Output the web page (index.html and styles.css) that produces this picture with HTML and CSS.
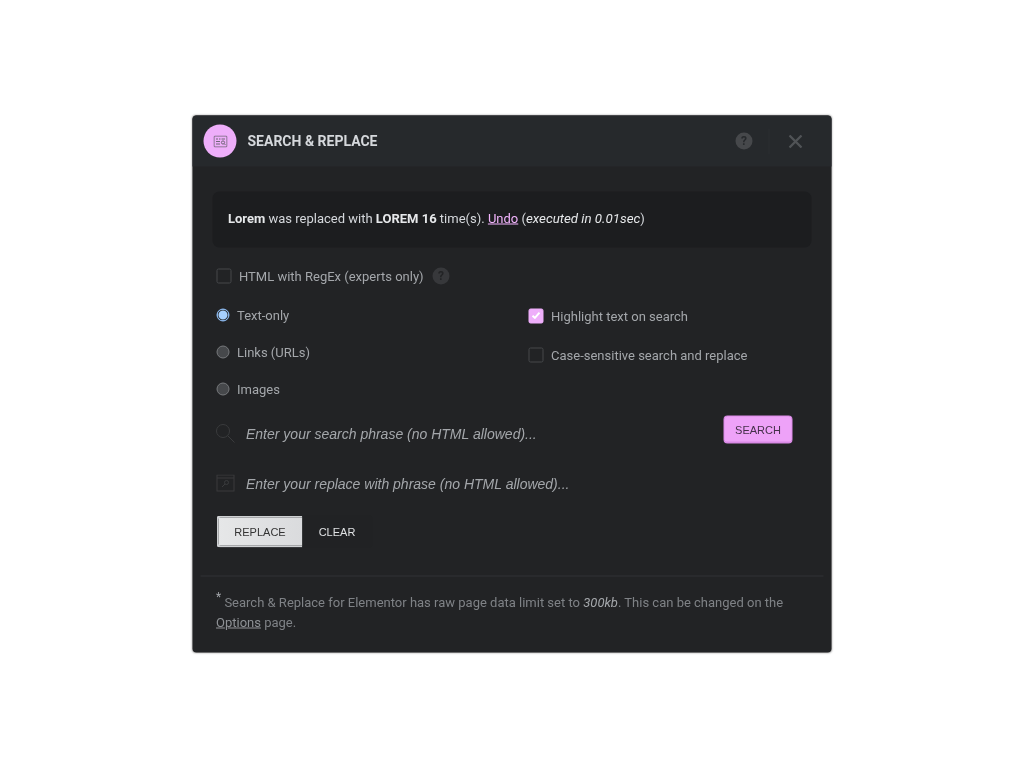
FILE: index.html
```html
<!DOCTYPE html>
<html lang="en">
<head>
<meta charset="utf-8">
<title>Search &amp; Replace</title>
<link rel="stylesheet" href="styles.css">
</head>
<body>
<div class="dialog">
  <header class="head">
    <span class="logo">
      <svg width="14" height="12" viewBox="0 0 14 12" fill="none" stroke="#6f6577" stroke-width="1">
        <rect x="0.5" y="0.5" width="13" height="11" rx="1"/>
        <path d="M2.500 3.500h2M5.500 3.500h1.500M8 3.500h3.500M2.500 6h4M2.500 8.500h4"/>
        <circle cx="9.500" cy="7" r="1.600"/>
        <path d="M10.700 8.200l1.300 1.300"/>
      </svg>
    </span>
    <h1 class="title">SEARCH &amp; REPLACE</h1>
    <span class="head-help">?</span>
    <span class="head-sep"></span>
    <svg class="head-close" width="14" height="14" viewBox="0 0 14 14" fill="none" stroke="#505356" stroke-width="2.400">
      <path d="M1 1l12 12M13 1L1 13"/>
    </svg>
  </header>
  <main class="body">
    <p class="notice"><b>Lorem</b> was replaced with <b>LOREM 16</b> time(s). <a class="undo" href="#">Undo</a> (<i>executed in 0.01sec</i>)</p>
    <div class="regex">
      <span class="check"></span>
      <span class="label regex-label">HTML with RegEx (experts only)</span>
      <span class="help">?</span>
    </div>
    <div class="columns">
      <div class="radios">
        <div class="radio-row"><span class="radio on"></span><span class="label">Text-only</span></div>
        <div class="radio-row"><span class="radio"></span><span class="label">Links (URLs)</span></div>
        <div class="radio-row"><span class="radio"></span><span class="label">Images</span></div>
      </div>
      <div class="checks">
        <div class="check-row">
          <span class="check checked">
            <svg width="9" height="8" viewBox="0 0 9 8" fill="none" stroke="#fff" stroke-width="2"><path d="M1 4.200l2.400 2.200L8 1.200"/></svg>
          </span>
          <span class="label">Highlight text on search</span>
        </div>
        <div class="check-row"><span class="check"></span><span class="label">Case-sensitive search and replace</span></div>
      </div>
    </div>
    <div class="field search-field">
      <svg class="field-icon" width="20" height="20" viewBox="0 0 20 20" fill="none" stroke="#3a3b3d" stroke-width="1">
        <circle cx="7.500" cy="7.500" r="6.500"/>
        <path d="M12.500 12.500l6.500 6.500"/>
      </svg>
      <span class="placeholder">Enter your search phrase (no HTML allowed)...</span>
      <button class="btn-search" type="button">SEARCH</button>
    </div>
    <div class="field replace-field">
      <svg class="field-icon replace-icon" width="20" height="18" viewBox="0 0 20 18" fill="none" stroke="#3a3b3d" stroke-width="1">
        <rect x="1.500" y="0.500" width="17" height="16"/>
        <path d="M1.500 3.500h17"/>
        <circle cx="11" cy="8" r="2"/>
        <path d="M9.500 9.500l-3 3"/>
      </svg>
      <span class="placeholder">Enter your replace with phrase (no HTML allowed)...</span>
    </div>
    <div class="actions">
      <button class="btn-replace" type="button">REPLACE</button>
      <button class="btn-clear" type="button">CLEAR</button>
    </div>
  </main>
  <footer class="foot">
    <p class="foot-text"><sup class="star">*</sup> Search &amp; Replace for Elementor has raw page data limit set to <i>300kb</i>. This can be changed on the <a class="options" href="#">Options</a> page.</p>
  </footer>
</div>
</body>
</html>
```
FILE: styles.css
```css
* { box-sizing: border-box; }
html, body { margin: 0; height: 100%; }
body {
  background: #fff;
  font-family: Roboto, "Liberation Sans", sans-serif;
}
.dialog {
  position: absolute;
  top: 50%;
  left: 50%;
  transform: translate(-50%, -50%);
  will-change: transform;
  width: 639px;
  height: 537px;
  background: #222325;
  border-radius: 4px;
  box-shadow: 0 0 2px rgba(0,0,0,.4);
  display: flex;
  flex-direction: column;
}
.head {
  height: 51px;
  flex: none;
  background: #26292c;
  border-radius: 4px 4px 0 0;
  display: flex;
  align-items: center;
  padding: 0 29px 0 11px;
}
.logo {
  width: 33px;
  height: 33px;
  border-radius: 50%;
  background: #eeaefa;
  display: flex;
  align-items: center;
  justify-content: center;
}
.title {
  margin: 0 0 2px 11px;
  font-size: 14px;
  font-weight: 700;
  color: #d5d8dc;
  flex: 1;
}
.head-help {
  width: 17px;
  height: 17px;
  border-radius: 50%;
  background: #46484b;
  color: #26292c;
  font-size: 12px;
  font-weight: 700;
  line-height: 17px;
  text-align: center;
}
.head-sep {
  width: 1px;
  height: 26px;
  margin: 0 19px 0 16px;
  background: #2b2e31;
}
.body {
  flex: 1;
  padding: 25px 20px 0;
}
.notice {
  margin: 0;
  height: 56px;
  background: #1c1d1f;
  border-radius: 7px;
  padding: 0 15.500px;
  font-size: 13px;
  line-height: 54px;
  color: #d5d8dc;
}
.notice b { font-weight: 700; color: #e6e8ea; }
.notice i { font-size: 13.300px; color: #e6e8ea; }
.undo { color: #f2b4fd; }
.regex {
  display: flex;
  align-items: center;
  height: 20px;
  margin: 18px 0 0 4px;
}
.label { font-size: 13px; color: #a4a7ab; }
.regex-label { margin-left: 7.500px; }
.check {
  width: 15px;
  height: 15px;
  flex: none;
  border: 1px solid #46484b;
  border-radius: 2px;
  display: flex;
  align-items: center;
  justify-content: center;
}
.check.checked { background: #eeaefa; border-color: #eeaefa; }
.help {
  width: 17px;
  height: 17px;
  margin-left: 9px;
  border-radius: 50%;
  background: #37383b;
  color: #222325;
  font-size: 12px;
  font-weight: 700;
  line-height: 17px;
  text-align: center;
}
.columns {
  display: flex;
  margin: 19px 0 0 4px;
}
.radios { width: 312px; }
.radio-row {
  display: flex;
  align-items: center;
  height: 20px;
  margin-bottom: 17px;
}
.radio {
  width: 13px;
  height: 13px;
  margin-right: 7.500px;
  border-radius: 50%;
  background: #46484b;
  border: 1px solid #77797c;
  flex: none;
}
.radio.on {
  background: #a6d0ff;
  border: 1px solid #8ab9f2;
  box-shadow: inset 0 0 0 1px #2a2c30;
}
.check-row {
  display: flex;
  align-items: center;
  gap: 7.500px;
  height: 20px;
  margin: 1px 0 19px;
}
.field {
  display: flex;
  align-items: flex-start;
  margin-left: 4px;
}
.search-field { height: 50px; margin-top: -1px; }
.replace-field { height: 32px; }
.field-icon { flex: none; margin: 9px 10.500px 0 -1px; }
.replace-icon { margin-top: 10px; }
.placeholder {
  font-family: "Liberation Sans", sans-serif;
  font-style: italic;
  font-size: 14px;
  color: #a4a7ab;
  line-height: 20px;
  margin-top: 9px;
  flex: 1;
}
.btn-search {
  width: 69px;
  height: 28px;
  margin: 1px 19px 0 0;
  padding: 0;
  background: #eea2f8;
  border: 1px solid #d98ae5;
  border-bottom-width: 2px;
  border-radius: 4px;
  font-family: "Liberation Sans", sans-serif;
  font-size: 11px;
  color: #45304a;
}
.actions {
  display: flex;
  margin: 19px 0 0 4px;
}
.btn-replace {
  width: 86px;
  height: 32px;
  padding: 0 1px 0 0;
  background: linear-gradient(90deg, #e6e7e8, #dadbdd);
  border: 2px solid #cfd1d3;
  border-right: 0;
  border-radius: 4px 0 0 4px;
  font-family: "Liberation Sans", sans-serif;
  font-size: 11px;
  color: #333;
}
.btn-clear {
  width: 70px;
  height: 32px;
  padding: 0 1px 0 0;
  background: #212224;
  border: 0;
  border-radius: 0 3px 3px 0;
  font-family: "Liberation Sans", sans-serif;
  font-size: 11px;
  color: #dfe1e3;
}
.foot {
  margin: 0 8px;
  border-top: 1px solid #303236;
  padding: 16px 8px 0 15.500px;
  height: 77px;
  flex: none;
}
.foot-text {
  margin: 0;
  font-size: 13px;
  line-height: 20px;
  color: #7f8286;
}
.foot-text i { color: #a4a7ab; }
.star { font-size: 12px; line-height: 0; color: #a4a7ab; }
.options { color: #8f9296; }
```
